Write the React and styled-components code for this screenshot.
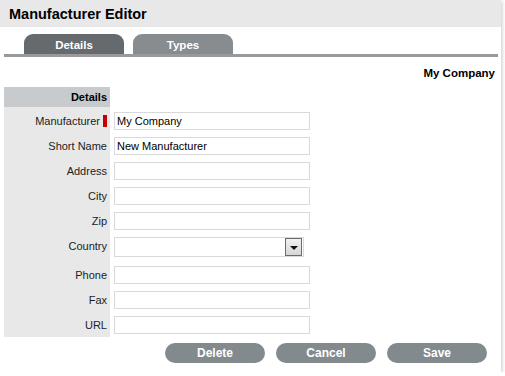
import React from "react";
import styled, { createGlobalStyle } from "styled-components";

const Global = createGlobalStyle`
  html, body { margin: 0; padding: 0; background: #fff; }
  body { font-family: "Liberation Sans", Arial, sans-serif; }
`;

const Panel = styled.div`
  width: 501px;
  height: 372px;
  background: #fff;
  box-shadow: 1px 1px 4px rgba(0, 0, 0, 0.22);
  display: flex;
  flex-direction: column;
`;

const Header = styled.div`
  height: 27px;
  background: #e8e8e8;
  display: flex;
  align-items: center;
  padding-left: 9px;
  padding-top: 1px;
  box-sizing: border-box;
`;

const Title = styled.h1`
  margin: 0;
  font-size: 14.5px;
  font-weight: bold;
  color: #000;
`;

const Tabs = styled.div`
  display: flex;
  gap: 9px;
  margin-top: 7px;
  padding-left: 24px;
`;

const Tab = styled.div`
  width: 100px;
  height: 20px;
  box-sizing: border-box;
  padding-top: 2px;
  border-radius: 9px 9px 0 0;
  background: ${(p) => (p.$active ? "#646a6d" : "#868c90")};
  color: #fff;
  font-weight: bold;
  font-size: 11.5px;
  display: flex;
  align-items: center;
  justify-content: center;
`;

const TabLine = styled.div`
  height: 3px;
  background: #9a9a9a;
  margin: 0 3px 0 4px;
`;

const Owner = styled.div`
  text-align: right;
  font-weight: bold;
  font-size: 11.5px;
  line-height: 14px;
  padding: 9px 6px 7px 0;
  color: #000;
`;

const Form = styled.div`
  margin-left: 4px;
  display: flex;
  flex-direction: column;
`;

const Row = styled.div`
  display: grid;
  grid-template-columns: 106px 1fr;
  height: ${(p) => p.$h || 25}px;
`;

const SectionHead = styled.div`
  background: #c8cbce;
  height: 20px;
  font-weight: bold;
  font-size: 11px;
  line-height: 20px;
  text-align: right;
  padding-right: 3px;
  box-sizing: border-box;
`;

const Label = styled.div`
  background: #e8e8e8;
  font-size: 11px;
  color: #1c1c1c;
  text-align: right;
  padding: 5px 3px 0 0;
  line-height: 18px;
  display: flex;
  justify-content: flex-end;
  align-items: flex-start;
`;

const Required = styled.span`
  width: 4px;
  height: 12px;
  background: #c40000;
  margin: 3px 0 0 3px;
`;

const Cell = styled.div`
  padding: 5px 0 0 4px;
`;

const Input = styled.div`
  width: 196px;
  height: 18px;
  box-sizing: border-box;
  border: 1px solid #d9d9d9;
  font-size: 11px;
  line-height: 16px;
  padding-left: 2px;
  color: #000;
`;

const Select = styled.div`
  width: 190px;
  height: 20px;
  box-sizing: border-box;
  border: 1px solid #d9d9d9;
  display: flex;
  justify-content: flex-end;
  align-items: center;
  padding-right: 1px;
`;

const DropButton = styled.div`
  width: 17px;
  height: 18px;
  box-sizing: border-box;
  border: 1px solid #6a6a6a;
  background: linear-gradient(#f2f2f2, #d6d6d6);
  display: flex;
  align-items: center;
  justify-content: center;
`;

const Arrow = styled.span`
  width: 0;
  height: 0;
  border-left: 4px solid transparent;
  border-right: 4px solid transparent;
  border-top: 4px solid #111;
  margin-top: 1px;
`;

const Actions = styled.div`
  display: flex;
  justify-content: flex-end;
  gap: 11px;
  padding-right: 14px;
  margin-top: 6px;
`;

const Button = styled.div`
  width: 100px;
  height: 20px;
  border-radius: 10px;
  background: #838a8e;
  color: #fff;
  font-weight: bold;
  font-size: 12px;
  display: flex;
  align-items: center;
  justify-content: center;
`;

const fields = [
  { label: "Manufacturer", value: "My Company", required: true },
  { label: "Short Name", value: "New Manufacturer" },
  { label: "Address", value: "" },
  { label: "City", value: "" },
  { label: "Zip", value: "" },
  { label: "Country", select: true, h: 29 },
  { label: "Phone", value: "" },
  { label: "Fax", value: "" },
  { label: "URL", value: "", h: 26 },
];

export default function App() {
  return (
    <>
      <Global />
      <Panel>
        <Header>
          <Title>Manufacturer Editor</Title>
        </Header>
        <Tabs>
          <Tab $active>Details</Tab>
          <Tab>Types</Tab>
        </Tabs>
        <TabLine />
        <Owner>My Company</Owner>
        <Form>
          <Row $h={20}>
            <SectionHead>Details</SectionHead>
            <div />
          </Row>
          {fields.map((f) => (
            <Row key={f.label} $h={f.h}>
              <Label>
                {f.label}
                {f.required && <Required />}
              </Label>
              <Cell>
                {f.select ? (
                  <Select>
                    <DropButton>
                      <Arrow />
                    </DropButton>
                  </Select>
                ) : (
                  <Input>{f.value}</Input>
                )}
              </Cell>
            </Row>
          ))}
        </Form>
        <Actions>
          <Button>Delete</Button>
          <Button>Cancel</Button>
          <Button>Save</Button>
        </Actions>
      </Panel>
    </>
  );
}
